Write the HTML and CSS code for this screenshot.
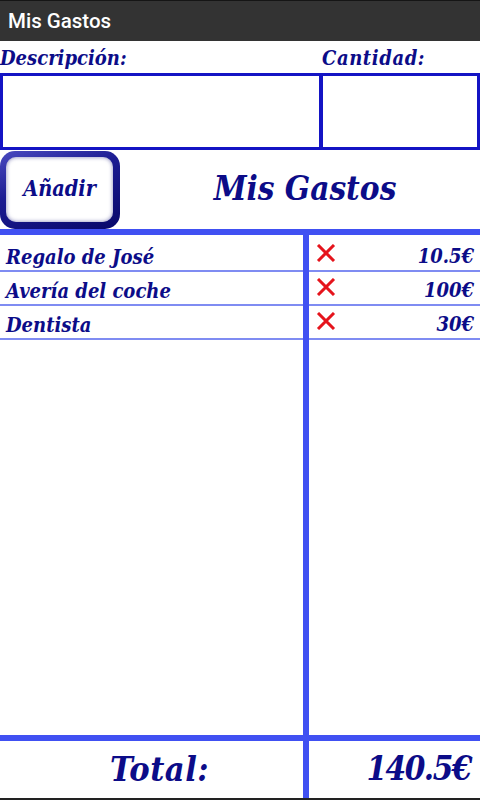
FILE: index.html
```html
<!DOCTYPE html>
<html lang="es">
<head>
<meta charset="utf-8">
<title>Mis Gastos</title>
<link rel="stylesheet" href="styles.css">
</head>
<body>
<div class="app">
  <header class="titlebar">Mis Gastos</header>
  <div class="labels">
    <div class="label label-desc">Descripción:</div>
    <div class="label label-cant">Cantidad:</div>
  </div>
  <div class="inputs">
    <div class="box box-desc"></div>
    <div class="box box-cant"></div>
  </div>
  <div class="actions">
    <div class="btn"><div class="btn-face">Añadir</div></div>
    <h1 class="heading">Mis Gastos</h1>
  </div>
  <div class="sep"></div>
  <div class="list">
    <div class="col col-left">
      <div class="cell name">Regalo de José</div>
      <div class="cell name">Avería del coche</div>
      <div class="cell name">Dentista</div>
    </div>
    <div class="col col-right">
      <div class="cell amt-cell"><svg class="del" viewBox="0 0 20 18" width="20" height="18"><path d="M2 1 L18 17 M18 1 L2 17" stroke="#e5141c" stroke-width="3" fill="none"/></svg><span class="amt">10.5€</span></div>
      <div class="cell amt-cell"><svg class="del" viewBox="0 0 20 18" width="20" height="18"><path d="M2 1 L18 17 M18 1 L2 17" stroke="#e5141c" stroke-width="3" fill="none"/></svg><span class="amt">100€</span></div>
      <div class="cell amt-cell"><svg class="del" viewBox="0 0 20 18" width="20" height="18"><path d="M2 1 L18 17 M18 1 L2 17" stroke="#e5141c" stroke-width="3" fill="none"/></svg><span class="amt">30€</span></div>
    </div>
  </div>
  <div class="sep"></div>
  <div class="footer">
    <div class="total-label">Total:</div>
    <div class="total-amt">140.5€</div>
  </div>
  <div class="navline"></div>
</div>
</body>
</html>
```
FILE: styles.css
```css
html, body {
  margin: 0;
  padding: 0;
  background: #ffffff;
}
.app {
  width: 480px;
  height: 800px;
  display: flex;
  flex-direction: column;
  font-family: "DejaVu Serif Condensed", "DejaVu Serif", serif;
  font-stretch: condensed;
  font-style: italic;
  font-weight: bold;
  color: #0c0c88;
}
.titlebar {
  height: 40px;
  border-top: 1px solid #151515;
  background: #333333;
  color: #ffffff;
  font-family: Roboto, "Liberation Sans", sans-serif;
  font-style: normal;
  font-weight: 500;
  font-stretch: normal;
  font-size: 20.5px;
  line-height: 40px;
  padding-left: 8px;
  flex: none;
}
.labels {
  height: 32px;
  display: flex;
  align-items: flex-end;
  flex: none;
}
.label {
  font-size: 20px;
  line-height: 30px;
}
.label-desc {
  width: 322px;
}
.label-cant {
  letter-spacing: 0.6px;
}
.inputs {
  height: 77px;
  display: flex;
  flex: none;
}
.box {
  box-sizing: border-box;
  height: 77px;
  border: 3px solid #1414c4;
  background: #ffffff;
}
.box-desc {
  width: 321px;
  border-right-width: 2px;
}
.box-cant {
  flex: 1;
  border-left-width: 2px;
}
.actions {
  height: 79px;
  display: flex;
  align-items: center;
  flex: none;
}
.btn {
  box-sizing: border-box;
  width: 120px;
  height: 78px;
  margin-top: 1px;
  padding: 6px 7px 7px 6px;
  border-radius: 15px;
  background: linear-gradient(160deg, #4a4ac0 0%, #1c1c92 40%, #08086a 100%);
  flex: none;
}
.btn-face {
  height: 100%;
  border-radius: 10px;
  background: #ffffff;
  box-shadow: inset 0 0 4px rgba(20, 20, 120, 0.55);
  display: flex;
  align-items: center;
  justify-content: center;
  font-size: 21.5px;
  padding-bottom: 2px;
  box-sizing: border-box;
}
.heading {
  flex: 1;
  margin: 0;
  text-align: center;
  font-size: 33px;
  font-weight: bold;
  padding-left: 10px;
  padding-bottom: 2px;
}
.sep {
  height: 6px;
  background: #4050f2;
  flex: none;
}
.list {
  flex: 1;
  display: flex;
  padding-top: 3px;
}
.col-left {
  width: 303px;
}
.col-right {
  flex: 1;
  border-left: 6px solid #4050f2;
  margin-top: -3px;
  padding-top: 3px;
}
.cell {
  box-sizing: border-box;
  height: 34px;
  border-bottom: 2px solid #7f8cf2;
  font-size: 20px;
  line-height: 32px;
  padding-top: 3px;
}
.name {
  padding-left: 6px;
}
.amt-cell {
  display: flex;
  align-items: center;
  padding: 3px 6px 0 7px;
}
.del {
  margin-top: -5px;
  flex: none;
}
.amt {
  flex: 1;
  text-align: right;
}
.footer {
  height: 57px;
  display: flex;
  flex: none;
}
.total-label {
  width: 303px;
  box-sizing: border-box;
  text-align: center;
  padding-left: 16px;
  font-size: 34px;
  line-height: 56px;
  letter-spacing: 0.5px;
}
.total-amt {
  flex: 1;
  border-left: 6px solid #4050f2;
  text-align: right;
  padding-right: 9px;
  font-size: 33px;
  line-height: 56px;
  letter-spacing: -1.5px;
}
.navline {
  height: 2px;
  background: #222222;
  flex: none;
}
```
